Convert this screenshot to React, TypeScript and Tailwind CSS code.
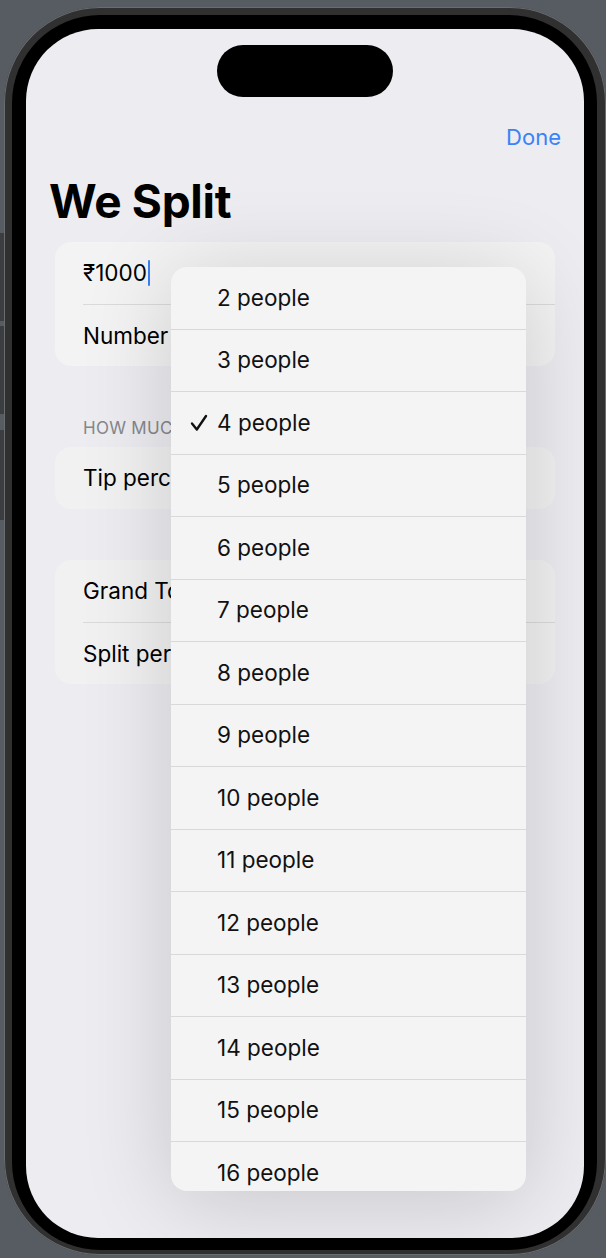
import React from "react";

const font = { fontFamily: "Inter, 'Noto Sans', 'Liberation Sans', sans-serif" };

function Check() {
  return (
    <svg width="18" height="18" viewBox="0 0 18 18" fill="none">
      <path d="M2 9.5 L6.8 15.5 L16 2" stroke="#111" strokeWidth="2.4" strokeLinecap="round" strokeLinejoin="round" />
    </svg>
  );
}

function Clip({ children }: { children: React.ReactNode }) {
  return <span className="block w-[88px] overflow-hidden whitespace-nowrap">{children}</span>;
}

export default function App() {
  const people = Array.from({ length: 15 }, (_, i) => i + 2);
  return (
    <div className="w-[606px] h-[1258px] bg-[#575c63] overflow-hidden relative" style={font}>
      {/* side buttons */}
      <div className="absolute left-0 top-[233px] w-[4px] h-[88px] bg-[#3b3d40]" />
      <div className="absolute left-0 top-[326px] w-[4px] h-[88px] bg-[#3b3d40]" />
      <div className="absolute left-0 top-[430px] w-[4px] h-[90px] bg-[#3b3d40]" />
      <div className="ml-[4px] mt-[7px] w-[602px] h-[1248px] rounded-[96px] bg-[#303030] pl-[8px] pt-[8px] pr-[9px] pb-[5px] shadow-[inset_0_0_0_1px_#6a6d70]">
        <div className="w-full h-full rounded-[88px] bg-black pl-[14px] pt-[14px] pr-[13px] pb-[12px]">
          <div className="relative w-[558px] h-[1209px] rounded-[72px] bg-[#ececf1] overflow-hidden flex flex-col">
            <div className="mx-auto mt-[16px] w-[176px] h-[52px] rounded-full bg-black" />
            <div className="flex justify-end pr-[23px] mt-[26px] h-[28px] items-center">
              <span className="text-[22px] text-[#3a82f7] leading-none">Done</span>
            </div>
            <div className="pl-[23px] mt-[26px] h-[48px] flex items-center">
              <span className="text-[46px] font-bold text-black leading-none tracking-[-0.3px]">We Split</span>
            </div>
            <div className="mt-[17px] mx-[29px] rounded-[16px] bg-[#f3f3f4]">
              <div className="h-[62px] flex items-center pl-[28px] text-[22.5px] text-black">
                ₹1000<span className="inline-block w-[2.5px] h-[26px] bg-[#3a82f7] ml-[1px] rounded-sm" />
              </div>
              <div className="ml-[28px] h-px bg-[#dadadc]" />
              <div className="h-[61px] flex items-center pl-[28px] text-[22.5px] text-black"><Clip>Number of people</Clip></div>
            </div>
            <div className="mt-[49px] pl-[57px] h-[28px] flex items-center text-[17px] text-[#86868b] tracking-[0.3px]">
              <Clip>HOW MUCH DO YOU WANT TO TIP?</Clip>
            </div>
            <div className="mt-[4px] mx-[29px] rounded-[16px] bg-[#f1f1f2] h-[62px] flex items-center pl-[28px] text-[22.5px] text-black">
              <Clip>Tip percentage</Clip>
            </div>
            <div className="mt-[51px] mx-[29px] rounded-[16px] bg-[#f1f1f2]">
              <div className="h-[62px] flex items-center pl-[28px] text-[22.5px] text-black"><Clip>Grand Total</Clip></div>
              <div className="ml-[28px] h-px bg-[#dadadc]" />
              <div className="h-[61px] flex items-center pl-[28px] text-[22.5px] text-black"><Clip>Split per person</Clip></div>
            </div>

            {/* Menu overlay */}
            <div className="absolute left-[145px] top-[238px] w-[355px] h-[924px] rounded-[16px] bg-[#f4f4f5] overflow-hidden shadow-[0_10px_90px_rgba(0,0,0,0.16)]">
              {people.map((n, i) => (
                <div key={n}>
                  {i > 0 && <div className="h-px bg-[#d9d9db]" />}
                  <div className="h-[61.5px] flex items-center text-[22.5px] text-[#111]">
                    <div className="w-[46px] flex justify-end pr-[9px]">{n === 4 && <Check />}</div>
                    <span>{n} people</span>
                  </div>
                </div>
              ))}
            </div>
          </div>
        </div>
      </div>
    </div>
  );
}
